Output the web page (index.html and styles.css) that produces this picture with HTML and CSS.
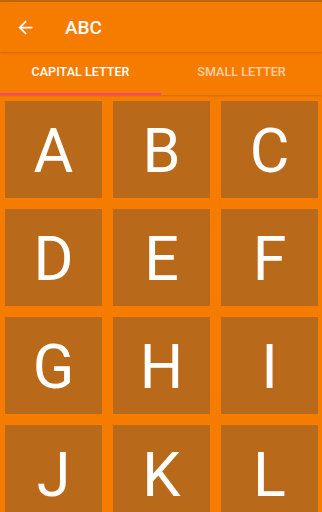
FILE: index.html
```html
<!DOCTYPE html>
<html lang="en">
<head>
    <meta charset="UTF-8">
    <meta name="viewport" content="width=device-width, initial-scale=1.0">
    <title>ABC</title>
    <link rel="stylesheet" href="styles.css">
</head>
<body>
    <div class="status"></div>
    <header class="toolbar">
        <svg class="back" viewBox="0 0 24 24" width="21" height="21">
            <path d="M20 11H7.83l5.59-5.59L12 4l-8 8 8 8 1.41-1.41L7.83 13H20v-2z" fill="#fff"/>
        </svg>
        <span class="title">ABC</span>
    </header>
    <nav class="tabs">
        <div class="tab active">CAPITAL LETTER</div>
        <div class="tab">SMALL LETTER</div>
    </nav>
    <main class="grid">
        <div class="cell">A</div>
        <div class="cell">B</div>
        <div class="cell">C</div>
        <div class="cell">D</div>
        <div class="cell">E</div>
        <div class="cell">F</div>
        <div class="cell">G</div>
        <div class="cell">H</div>
        <div class="cell">I</div>
        <div class="cell">J</div>
        <div class="cell">K</div>
        <div class="cell">L</div>
    </main>
</body>
</html>
```

FILE: styles.css
```css
body {
    margin: 0;
    padding: 0;
    width: 322px;
    height: 512px;
    overflow: hidden;
    background: #f67c00;
    font-family: Roboto, "Liberation Sans", sans-serif;
    color: #fff;
}
.status {
    height: 2px;
    background: #c0680e;
}
.toolbar {
    height: 50px;
    display: flex;
    align-items: center;
    padding-left: 15px;
    box-shadow: 0 1px 2px rgba(0, 0, 0, 0.18);
    position: relative;
}
.back {
    display: block;
}
.title {
    margin-left: 29px;
    font-size: 19px;
    font-weight: 500;
}
.tabs {
    display: flex;
    height: 43px;
    box-shadow: 0 1px 2px rgba(0, 0, 0, 0.15);
}
.tab {
    flex: 1;
    display: flex;
    align-items: center;
    justify-content: center;
    padding-bottom: 4px;
    font-size: 12.6px;
    font-weight: 500;
    color: rgba(255, 255, 255, 0.65);
    box-sizing: border-box;
}
.tab.active {
    color: #fff;
    border-bottom: 2px solid #ff4081;
    padding-bottom: 2px;
}
.grid {
    display: grid;
    grid-template-columns: repeat(3, 97px);
    grid-auto-rows: 97px;
    gap: 11px;
    padding: 6px 4px 0 5px;
}
.cell {
    background: #b8691a;
    display: flex;
    align-items: center;
    justify-content: center;
    padding-top: 3px;
    box-sizing: border-box;
    font-size: 61px;
    line-height: 1;
}
```
